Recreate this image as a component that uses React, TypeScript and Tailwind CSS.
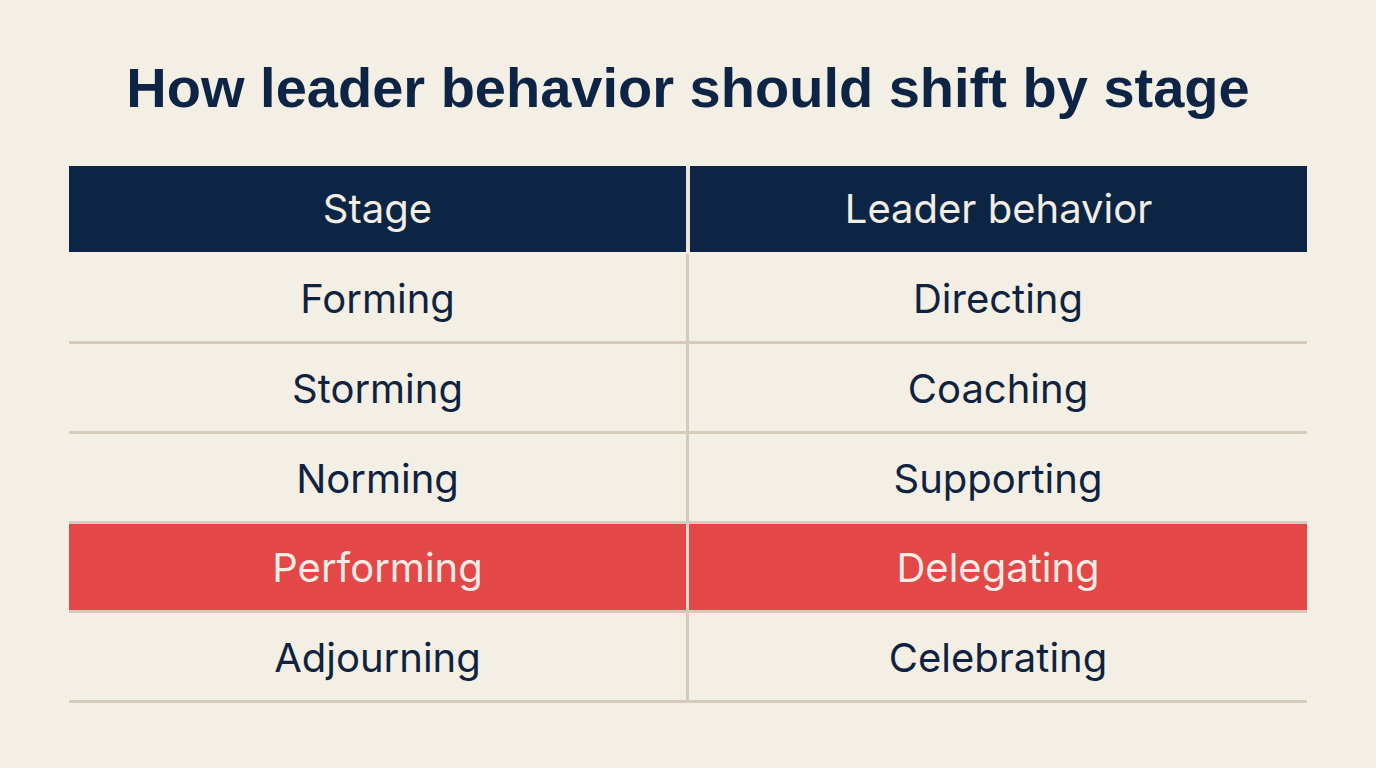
const rows = [
  { stage: "Forming", behavior: "Directing", highlight: false },
  { stage: "Storming", behavior: "Coaching", highlight: false },
  { stage: "Norming", behavior: "Supporting", highlight: false },
  { stage: "Performing", behavior: "Delegating", highlight: true },
  { stage: "Adjourning", behavior: "Celebrating", highlight: false },
];

const App = () => {
  return (
    <div className="w-[1376px] h-[768px] bg-[#f3efe5] overflow-hidden font-['Inter',sans-serif]">
      {/* Title */}
      <h1 className="pt-[56px] h-[166px] text-center text-[56px] leading-[64px] font-bold text-[#0d2444] font-['Liberation_Sans',Arial,sans-serif]">
        How leader behavior should shift by stage
      </h1>

      {/* Table */}
      <div className="mx-[69px] w-[1238px]">
        {/* Header */}
        <div className="flex h-[86px]">
          <div className="w-[617px] bg-[#0d2545] flex items-center justify-center text-[40px] text-[#f2eee4]">
            Stage
          </div>
          <div className="w-[4px] bg-[#ebe6da]" />
          <div className="flex-1 bg-[#0d2545] flex items-center justify-center text-[40px] text-[#f2eee4]">
            Leader behavior
          </div>
        </div>

        <div className="pt-[2px]">
          {rows.map((row) => (
            <div
              key={row.stage}
              className={`flex h-[90px] border-b-[3px] ${
                row.highlight ? "border-[#d6cbbb] border-t-[3px] -mt-[3px] h-[92px]" : "border-[#d6cbbb]"
              }`}
            >
              <div
                className={`w-[617px] flex items-center justify-center pt-[2px] text-[40px] ${
                  row.highlight ? "bg-[#e34747] text-[#f6ece4]" : "text-[#0f2340]"
                }`}
              >
                {row.stage}
              </div>
              <div className={`w-[3px] ${row.highlight ? "bg-[#eed8cf]" : "bg-[#d3cab8]"}`} />
              <div
                className={`flex-1 flex items-center justify-center pt-[2px] text-[40px] ${
                  row.highlight ? "bg-[#e34747] text-[#f6ece4]" : "text-[#0f2340]"
                }`}
              >
                {row.behavior}
              </div>
            </div>
          ))}
        </div>
      </div>
    </div>
  );
};

export default App;
